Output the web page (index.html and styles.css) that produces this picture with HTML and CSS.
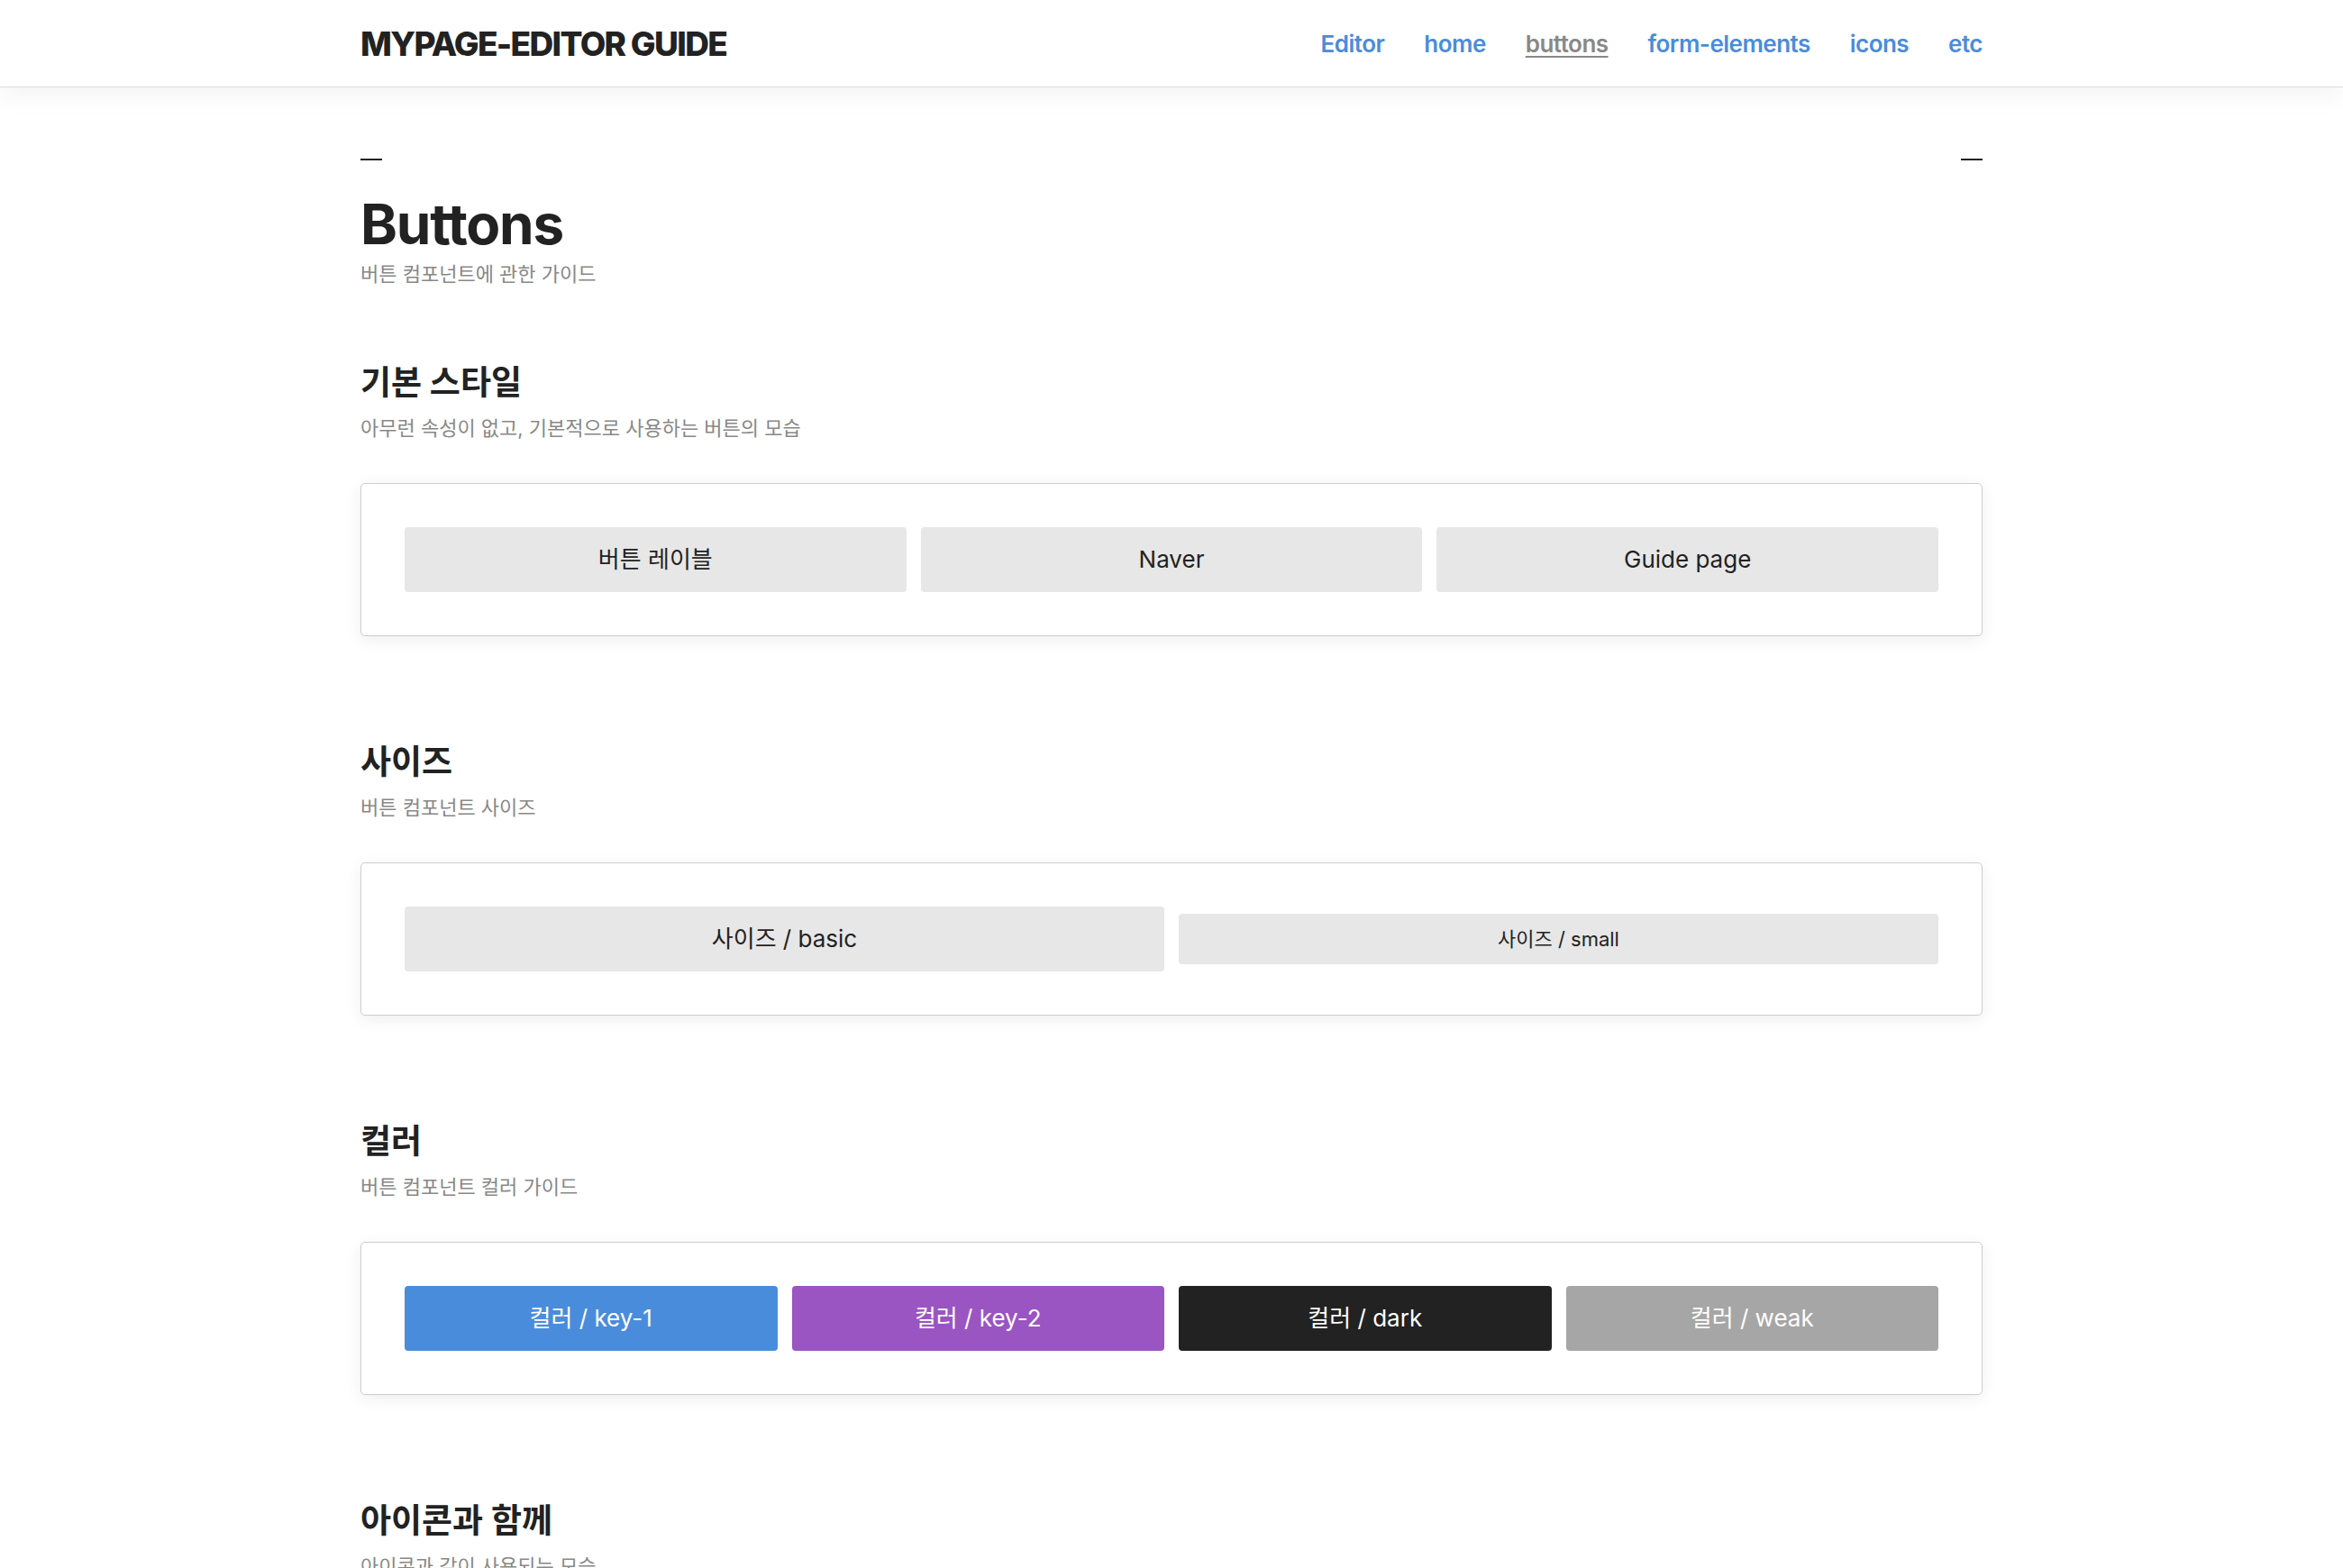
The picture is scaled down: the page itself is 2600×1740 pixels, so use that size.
FILE: index.html
```html
<!DOCTYPE html>
<html lang="ko">
<head>
<meta charset="utf-8">
<title>MYPAGE-EDITOR GUIDE - Buttons</title>
<link rel="stylesheet" href="styles.css">
</head>
<body>
<header class="gnb">
  <div class="gnb-inner">
    <h1 class="logo">MYPAGE-EDITOR GUIDE</h1>
    <nav class="gnb-nav">
      <a class="gnb-link" href="#">Editor</a>
      <a class="gnb-link" href="#">home</a>
      <a class="gnb-link is-active" href="#">buttons</a>
      <a class="gnb-link" href="#">form-elements</a>
      <a class="gnb-link" href="#">icons</a>
      <a class="gnb-link" href="#">etc</a>
    </nav>
  </div>
</header>

<main class="container">
  <div class="page-marks"><span class="mark"></span><span class="mark"></span></div>
  <div class="page-head">
    <h2 class="page-title">Buttons</h2>
    <p class="page-desc">버튼 컴포넌트에 관한 가이드</p>
  </div>

  <section class="guide-section">
    <h3 class="sec-title">기본 스타일</h3>
    <p class="sec-desc">아무런 속성이 없고, 기본적으로 사용하는 버튼의 모습</p>
    <div class="demo-card">
      <div class="btn-row cols-3">
        <button class="btn">버튼 레이블</button>
        <button class="btn">Naver</button>
        <button class="btn">Guide page</button>
      </div>
    </div>
  </section>

  <section class="guide-section">
    <h3 class="sec-title">사이즈</h3>
    <p class="sec-desc">버튼 컴포넌트 사이즈</p>
    <div class="demo-card">
      <div class="btn-row cols-2">
        <button class="btn">사이즈 / basic</button>
        <button class="btn btn-small">사이즈 / small</button>
      </div>
    </div>
  </section>

  <section class="guide-section">
    <h3 class="sec-title">컬러</h3>
    <p class="sec-desc">버튼 컴포넌트 컬러 가이드</p>
    <div class="demo-card">
      <div class="btn-row cols-4">
        <button class="btn btn-key1">컬러 / key-1</button>
        <button class="btn btn-key2">컬러 / key-2</button>
        <button class="btn btn-dark">컬러 / dark</button>
        <button class="btn btn-weak">컬러 / weak</button>
      </div>
    </div>
  </section>

  <section class="guide-section">
    <h3 class="sec-title">아이콘과 함께</h3>
    <p class="sec-desc">아이콘과 같이 사용되는 모습</p>
    <div class="demo-card">
      <div class="btn-row cols-3">
        <button class="btn btn-icon"><svg class="ico" viewBox="0 0 24 24" width="24" height="24"><path d="M12 5v14M5 12h14" fill="none" stroke="currentColor" stroke-width="2" stroke-linecap="round"/></svg>추가하기</button>
        <button class="btn btn-icon"><svg class="ico" viewBox="0 0 24 24" width="24" height="24"><path d="M5 12l5 5L19 7" fill="none" stroke="currentColor" stroke-width="2" stroke-linecap="round" stroke-linejoin="round"/></svg>확인</button>
        <button class="btn btn-icon"><svg class="ico" viewBox="0 0 24 24" width="24" height="24"><path d="M6 6l12 12M18 6L6 18" fill="none" stroke="currentColor" stroke-width="2" stroke-linecap="round"/></svg>취소</button>
      </div>
    </div>
  </section>
</main>
</body>
</html>
```

FILE: styles.css
```css
* {
  box-sizing: border-box;
  margin: 0;
  padding: 0;
}

body {
  font-family: "Inter", "Noto Sans CJK KR", sans-serif;
  color: #222;
  background: #fff;
}

/* header */
.gnb {
  position: relative;
  z-index: 1;
  height: 97px;
  background: #fff;
  border-bottom: 1px solid #dcdcdc;
  box-shadow: 0 6px 30px rgba(0, 0, 0, 0.06);
}

.gnb-inner {
  width: 1800px;
  height: 100%;
  margin: 0 auto;
  display: flex;
  align-items: center;
  justify-content: space-between;
}

.logo {
  font-size: 37px;
  line-height: 1;
  font-weight: 800;
  letter-spacing: -0.045em;
  color: #222;
}

.gnb-nav {
  display: flex;
  gap: 44px;
}

.gnb-link {
  font-size: 26px;
  font-weight: 600;
  letter-spacing: -0.02em;
  color: #4a8cdb;
  text-decoration: none;
}

.gnb-link.is-active {
  color: #888;
  text-decoration: underline;
  text-decoration-thickness: 2px;
  text-underline-offset: 4px;
}

/* content */
.container {
  width: 1800px;
  margin: 0 auto;
  padding: 79px 0 120px;
}

.page-marks {
  display: flex;
  justify-content: space-between;
}

.mark {
  width: 24px;
  height: 2px;
  background: #222;
}

.page-title {
  margin-top: 33px;
  font-size: 62px;
  line-height: 75px;
  font-weight: 700;
  letter-spacing: -0.02em;
}

.page-desc {
  margin-top: 2px;
  font-size: 22px;
  line-height: 32px;
  color: #888;
}

.guide-section {
  margin-top: 81px;
}

.guide-section + .guide-section {
  margin-top: 116px;
}

.sec-title {
  font-size: 37px;
  line-height: 48px;
  font-weight: 700;
}

.sec-desc {
  margin-top: 10px;
  font-size: 22px;
  line-height: 32px;
  color: #888;
}

.demo-card {
  margin-top: 45px;
  padding: 48px;
  border: 1px solid #cdcdcd;
  border-radius: 5px;
  background: #fff;
  box-shadow: 0 4px 18px rgba(0, 0, 0, 0.07);
}

.btn-row {
  display: grid;
  gap: 16px;
  align-items: center;
}

.cols-2 { grid-template-columns: repeat(2, 1fr); }
.cols-3 { grid-template-columns: repeat(3, 1fr); }
.cols-4 { grid-template-columns: repeat(4, 1fr); }

.btn {
  display: flex;
  align-items: center;
  justify-content: center;
  gap: 8px;
  height: 72px;
  padding: 0 16px;
  border: 0;
  border-radius: 4px;
  background: #e7e7e7;
  color: #222;
  font-family: inherit;
  font-size: 26px;
  line-height: 32px;
  cursor: pointer;
}

.btn-small {
  height: 56px;
  font-size: 22px;
  line-height: 28px;
}

.btn-key1 { background: #4a8cdc; color: #fff; }
.btn-key2 { background: #9a55c2; color: #fff; }
.btn-dark { background: #222; color: #fff; }
.btn-weak { background: #a6a6a6; color: #fff; }

.ico {
  flex: none;
}
```
